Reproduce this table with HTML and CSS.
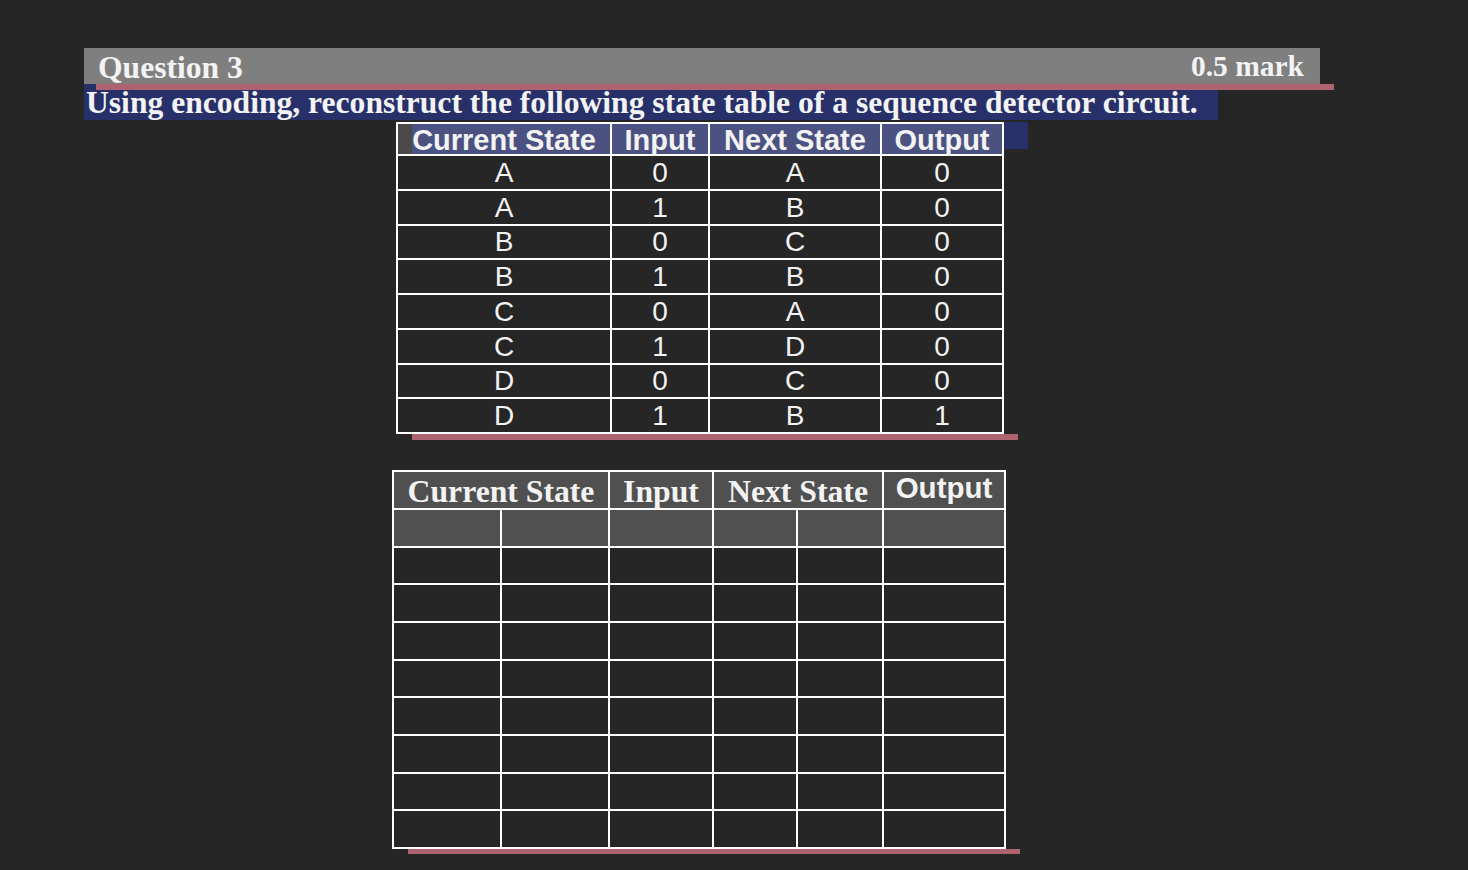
FILE: index.html
```html
<!DOCTYPE html>
<html lang="en">
<head>
<meta charset="utf-8">
<title>Question 3</title>
<link rel="stylesheet" href="styles.css">
</head>
<body>
<div class="slide">
  <div class="q-bar"><span class="q-title">Question 3</span><span class="q-mark">0.5 mark</span></div>
  <div class="rule"><span class="rule-blue"></span><span class="rule-pink"></span></div>
  <div class="prompt">Using encoding, reconstruct the following state table of a sequence detector circuit.</div>

  <div class="t1-wrap">
    <div class="t1">
      <div class="h h-first">Current State</div><div class="h">Input</div><div class="h">Next State</div><div class="h">Output</div>
      <div class="c">A</div><div class="c">0</div><div class="c">A</div><div class="c">0</div>
      <div class="c">A</div><div class="c">1</div><div class="c">B</div><div class="c">0</div>
      <div class="c">B</div><div class="c">0</div><div class="c">C</div><div class="c">0</div>
      <div class="c">B</div><div class="c">1</div><div class="c">B</div><div class="c">0</div>
      <div class="c">C</div><div class="c">0</div><div class="c">A</div><div class="c">0</div>
      <div class="c">C</div><div class="c">1</div><div class="c">D</div><div class="c">0</div>
      <div class="c">D</div><div class="c">0</div><div class="c">C</div><div class="c">0</div>
      <div class="c">D</div><div class="c">1</div><div class="c">B</div><div class="c">1</div>
    </div>
    <div class="t1-flag"></div>
  </div>
  <div class="underline u1"></div>

  <div class="t2">
    <div class="h2 span2">Current State</div><div class="h2">Input</div><div class="h2 span2">Next State</div><div class="h2 h2-sans">Output</div>
    <div class="e shade"></div><div class="e shade"></div><div class="e shade"></div><div class="e shade"></div><div class="e shade"></div><div class="e shade"></div>
    <div class="e"></div><div class="e"></div><div class="e"></div><div class="e"></div><div class="e"></div><div class="e"></div>
    <div class="e"></div><div class="e"></div><div class="e"></div><div class="e"></div><div class="e"></div><div class="e"></div>
    <div class="e"></div><div class="e"></div><div class="e"></div><div class="e"></div><div class="e"></div><div class="e"></div>
    <div class="e"></div><div class="e"></div><div class="e"></div><div class="e"></div><div class="e"></div><div class="e"></div>
    <div class="e"></div><div class="e"></div><div class="e"></div><div class="e"></div><div class="e"></div><div class="e"></div>
    <div class="e"></div><div class="e"></div><div class="e"></div><div class="e"></div><div class="e"></div><div class="e"></div>
    <div class="e"></div><div class="e"></div><div class="e"></div><div class="e"></div><div class="e"></div><div class="e"></div>
    <div class="e"></div><div class="e"></div><div class="e"></div><div class="e"></div><div class="e"></div><div class="e"></div>
  </div>
  <div class="underline u2"></div>
</div>
</body>
</html>
```

FILE: styles.css
```css
html, body {
  margin: 0;
  padding: 0;
  background: #262626;
}

.slide {
  padding: 48px 0 0 84px;
  color: #f3f3f3;
  font-family: "Liberation Serif", "Times New Roman", serif;
}

.q-bar {
  box-sizing: border-box;
  width: 1236px;
  height: 36px;
  padding: 0 16px 0 14px;
  background: #7f7f7f;
  display: flex;
  justify-content: space-between;
  align-items: center;
  font-weight: bold;
}

.q-title {
  font-size: 31.6px;
  padding-top: 3px;
}

.q-mark {
  font-size: 29.5px;
}

.rule {
  display: flex;
  height: 6px;
}

.rule-blue {
  width: 12px;
  background: #28306a;
}

.rule-pink {
  width: 1238px;
  background: #ae6470;
}

.prompt {
  box-sizing: border-box;
  width: 1134px;
  height: 30px;
  padding-left: 2px;
  background: #28306a;
  font-size: 31.6px;
  line-height: 26px;
  font-weight: bold;
  white-space: nowrap;
}

.t1-wrap {
  display: flex;
  align-items: flex-start;
  margin: 2px 0 0 312px;
}

.t1 {
  display: grid;
  grid-template-columns: 212px 96px 170px 120px;
  grid-template-rows: 30px;
  grid-auto-rows: 32.75px;
  gap: 2px;
  padding: 2px;
  background: #ffffff;
  font-family: "Liberation Sans", Arial, sans-serif;
}

.t1-flag {
  width: 24px;
  height: 27px;
  background: #28306a;
}

.h {
  background: #4b5282;
  font-size: 29px;
  font-weight: bold;
  display: flex;
  align-items: center;
  justify-content: center;
  line-height: 1;
  padding-top: 2px;
  white-space: nowrap;
}

.h-first {
  background: linear-gradient(to right, #4a4a4a 0 14px, #4b5282 14px);
}

.c {
  background: #262626;
  font-size: 28px;
  display: flex;
  align-items: center;
  justify-content: center;
  line-height: 1;
  padding-top: 1px;
}

.underline {
  background: #ae6470;
}

.u1 {
  margin-left: 328px;
  width: 606px;
  height: 6px;
}

.t2 {
  display: grid;
  grid-template-columns: 106px 106px 102px 82px 84px 120px;
  grid-template-rows: 36px;
  grid-auto-rows: 35.67px;
  gap: 2px;
  padding: 2px;
  width: max-content;
  background: #ffffff;
  margin: 30px 0 0 308px;
}

.h2 {
  background: #505050;
  font-size: 31.7px;
  font-weight: bold;
  display: flex;
  align-items: center;
  justify-content: center;
  line-height: 1;
  padding-top: 3px;
  white-space: nowrap;
}

.span2 {
  grid-column: span 2;
}

.h2-sans {
  font-family: "Liberation Sans", Arial, sans-serif;
  font-size: 29.5px;
  padding-top: 0;
  padding-bottom: 4px;
}

.e {
  background: #262626;
}

.e.shade {
  background: #505050;
}

.u2 {
  margin-left: 324px;
  width: 612px;
  height: 5px;
}
```
